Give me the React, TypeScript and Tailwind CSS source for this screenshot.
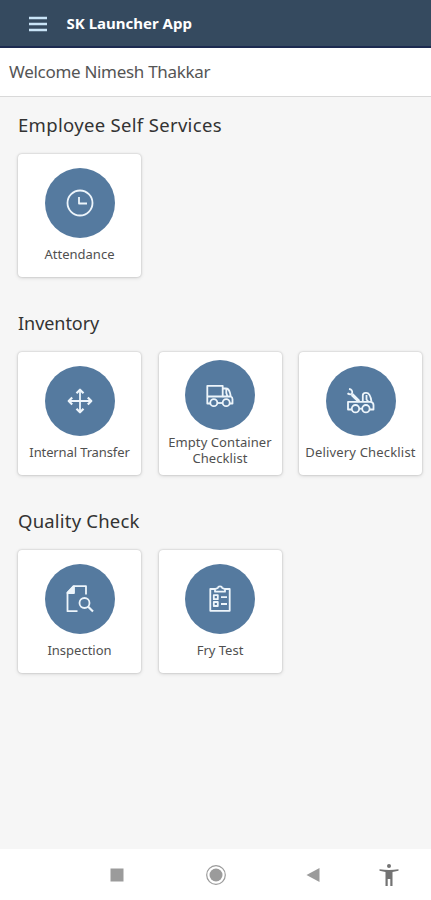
import type { ReactNode } from 'react';

type IconId = 'clock' | 'move' | 'truck' | 'tow' | 'inspect' | 'clipboard';

interface Tile {
  label: string;
  icon: IconId;
  labelClass: string;
}

interface Section {
  title: string;
  titleClass: string;
  tiles: Tile[];
}

const sections: Section[] = [
  {
    title: 'Employee Self Services',
    titleClass: 'pb-[2px] text-[18.500px] tracking-[0.32px]',
    tiles: [{ label: 'Attendance', icon: 'clock', labelClass: 'mt-[7.500px]' }],
  },
  {
    title: 'Inventory',
    titleClass: 'text-[18px] tracking-[-0.05px]',
    tiles: [
      { label: 'Internal Transfer', icon: 'move', labelClass: 'mt-[7.500px] tracking-[-0.12px]' },
      { label: 'Empty Container Checklist', icon: 'truck', labelClass: 'mt-[4px] tracking-[0.08px]' },
      { label: 'Delivery Checklist', icon: 'tow', labelClass: 'mt-[7.500px] tracking-[0.17px]' },
    ],
  },
  {
    title: 'Quality Check',
    titleClass: 'pb-[2px] text-[18.500px] tracking-[0.2px]',
    tiles: [
      { label: 'Inspection', icon: 'inspect', labelClass: 'mt-[7.500px]' },
      { label: 'Fry Test', icon: 'clipboard', labelClass: 'mt-[7.500px]' },
    ],
  },
];

const icons: Record<IconId, ReactNode> = {
  clock: (
    <>
      <circle cx="15" cy="15" r="12.5" />
      <path d="M14 9v6.500h8" />
    </>
  ),
  move: (
    <>
      <path d="M15 4v22M4 15h22" />
      <path d="M11.500 7.200 15 3.700l3.500 3.500M11.500 22.800l3.500 3.500 3.500-3.500M7.200 11.500 3.700 15l3.500 3.500M22.800 11.500l3.500 3.500-3.500 3.500" strokeWidth="2.200" />
    </>
  ),
  truck: (
    <>
      <path d="M5.200 23.500H2.300V5.800h15.400v10.700H2.300" />
      <path d="M17.700 8.500h3.300c2.400 0 3.400 2 4 4.500l.8 3.500c1.300.5 1.700 1.300 1.700 2.800v4.200h-2.800M17.700 16.500h8.100M21.300 8.800v4.200l1.200 3.500" />
      <circle cx="8.800" cy="22.700" r="3.500" />
      <circle cx="21.200" cy="22.700" r="3.500" />
      <path d="M12.300 23h5.400" />
    </>
  ),
  tow: (
    <>
      <path d="M5.700 23.500H2v-7.700h22.500c2.200.2 3 1.300 3 3.200v4.500h-3.700" />
      <path d="M6 8.500l7 6.800" strokeWidth="3.200" />
      <path d="M3 3c2.500.3 3.500 1.800 3.200 4-.2 1.500-2.700 1.800-4.700.3" />
      <path d="M16.800 15.500V9.500c0-1.900 1-2.700 2.700-2.700h.8c3.200 0 4.500 3.500 5.200 9M20.500 9v4.500l1.800 2" />
      <circle cx="9.500" cy="22.700" r="3.700" />
      <circle cx="19.900" cy="22.700" r="3.700" />
      <path d="M13.200 22.700h3" />
    </>
  ),
  inspect: (
    <>
      <path d="M12.500 27.200H2.500V8.500L8.500 2.200h12.500v8.300" />
      <path d="M2.500 9 9 2.500V9z" fill="currentColor" />
      <circle cx="19.500" cy="19" r="5" />
      <path d="m23.200 22.800 4.800 4.700" strokeWidth="2.200" />
    </>
  ),
  clipboard: (
    <>
      <path d="M10 5H5.300v21.800h19.400V5H20" />
      <path d="M10 7.700V5.200l2.800-1.200c.3-2.200 4.100-2.200 4.400 0l2.800 1.200v2.500z" />
      <path d="M8.800 11.200h4v4h-4zM8.800 18h4v4h-4zM16 13.200h6M16 20h6" />
    </>
  ),
};

function TileCard({ label, icon, labelClass }: Tile) {
  return (
    <button
      type="button"
      className="flex h-[123px] w-[123px] shrink-0 flex-col items-center justify-center rounded-[4px] bg-white pb-[1px] shadow-[0_0_2px_rgba(0,0,0,0.24),0_1px_4px_rgba(0,0,0,0.12)]"
    >
      <span className="flex size-[70px] shrink-0 items-center justify-center rounded-full bg-[#557a9f] text-[#edf5fb]">
        <svg width="30" height="30" viewBox="0 0 30 30" fill="none" stroke="currentColor" strokeWidth="1.800" strokeLinejoin="round">
          {icons[icon]}
        </svg>
      </span>
      <span className={`w-[122px] px-1 text-[13px] leading-4 text-[#505050] ${labelClass}`}>{label}</span>
    </button>
  );
}

function NavBar() {
  return (
    <nav className="flex h-[51px] items-center bg-white pl-[110px] text-[#9b9b9b]">
      <svg width="14" height="14" viewBox="0 0 14 14" fill="currentColor">
        <rect x="0.500" y="0.500" width="13" height="13" />
      </svg>
      <svg className="ml-[82px]" width="20" height="20" viewBox="0 0 20 20">
        <circle cx="10" cy="10" r="9.300" fill="none" stroke="currentColor" strokeWidth="1.200" />
        <circle cx="10" cy="10" r="6.500" fill="currentColor" />
      </svg>
      <svg className="ml-[80px]" width="14" height="14" viewBox="0 0 14 14" fill="currentColor">
        <path d="M13.500 0v14L.5 7z" />
      </svg>
      <svg className="ml-[59px] text-[#737373]" width="20" height="22" viewBox="0 0 20 22" fill="currentColor">
        <circle cx="10" cy="2" r="2" />
        <path d="M.5 5.200C7 6.200 13 6.200 19.500 5.200v1.600L13.500 8v14h-2.200v-7H8.700v7H6.500V8L.5 6.800z" />
      </svg>
    </nav>
  );
}

export default function App() {
  return (
    <div className="flex h-[900px] w-full flex-col overflow-hidden bg-[#f6f6f6] font-['Noto_Sans',sans-serif]">
      <header className="flex h-12 shrink-0 items-center border-b-2 border-[#1c2b50] bg-[#354a5f] pl-[29px] text-white">
        <svg className="mt-px" width="18" height="16" viewBox="0 0 18 16" fill="none" stroke="#c9e4f7" strokeWidth="2.400">
          <path d="M0 2h18M0 8h18M0 14h18" />
        </svg>
        <h1 className="ml-[19.500px] text-[15px] font-bold">SK Launcher App</h1>
      </header>
      <div className="flex h-[49px] shrink-0 items-center border-b border-[#d9d9d9] bg-white pl-[9px] text-[17px] tracking-[-0.3px] text-[#555]">
        <span>Welcome Nimesh Thakkar</span>
      </div>
      <main className="flex-1">
        {sections.map((section) => (
          <section key={section.title} className="h-[198px] pl-[18px]">
            <h2 className={`flex h-[57px] items-center text-[#333] ${section.titleClass}`}>{section.title}</h2>
            <div className="flex gap-[17.500px]">
              {section.tiles.map((tile) => (
                <TileCard key={tile.label} {...tile} />
              ))}
            </div>
          </section>
        ))}
      </main>
      <NavBar />
    </div>
  );
}
